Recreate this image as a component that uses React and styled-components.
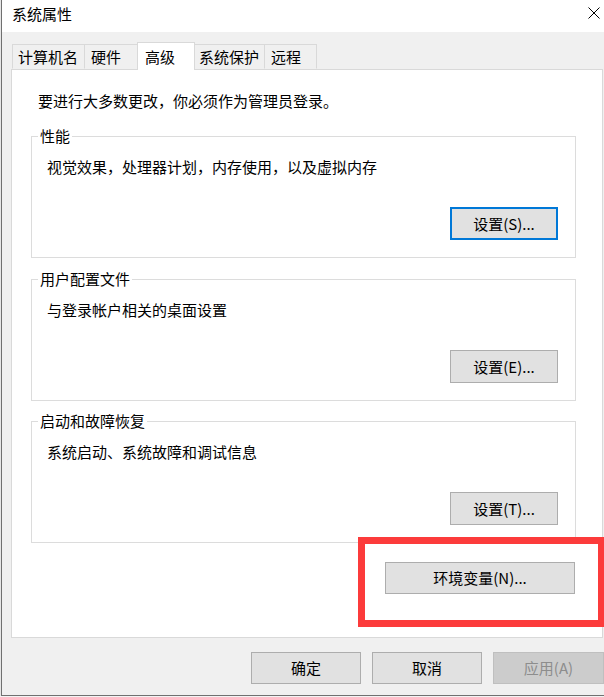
import React from 'react';
import styled, { createGlobalStyle } from 'styled-components';

const GlobalStyle = createGlobalStyle`
  html, body {
    margin: 0;
    padding: 0;
    overflow: hidden;
    background: #f3f3f3;
  }
  body {
    font-family: 'Noto Sans CJK SC', 'Noto Sans', sans-serif;
    font-size: 15px;
    line-height: 20px;
    color: #000000;
  }
`;

const Window = styled.div`
  position: relative;
  width: 615px;
  box-sizing: border-box;
  border-left: 1px solid #707070;
  border-bottom: 1px solid #707070;
  box-shadow: -1px 0 0 #e6e6e6;
  margin-left: 1px;
  background: #f0f0f0;
`;

const TitleBar = styled.div`
  height: 32px;
  display: flex;
  justify-content: space-between;
  align-items: flex-start;
  padding: 4px 16px 0 10px;
  box-sizing: border-box;
  background: #ffffff;
`;

const Title = styled.div`
  line-height: 20px;
`;

const CloseIcon = styled.svg`
  margin-top: 3px;
  width: 12px;
  height: 12px;
`;

const Body = styled.div`
  padding: 10px 11px 11px 9px;
  display: flex;
  flex-direction: column;
`;

const TabRow = styled.div`
  display: flex;
  align-items: flex-end;
  margin-left: 1px;
  height: 27px;
`;

const Tab = styled.div`
  position: relative;
  box-sizing: border-box;
  width: ${p => p.$w}px;
  height: ${p => (p.$active ? 28 : 25)}px;
  margin-left: ${p => (p.$first ? 0 : -1)}px;
  margin-bottom: ${p => (p.$active ? -1 : 0)}px;
  padding-left: ${p => p.$pad}px;
  display: flex;
  align-items: center;
  border: 1px solid #d9d9d9;
  border-bottom: ${p => (p.$active ? 'none' : '1px solid transparent')};
  background: ${p => (p.$active ? '#ffffff' : '#f0f0f0')};
  z-index: ${p => (p.$active ? 2 : 1)};
  white-space: nowrap;
`;

const Panel = styled.div`
  position: relative;
  width: 592px;
  box-sizing: border-box;
  background: #ffffff;
  border: 1px solid #d9d9d9;
  padding: 21px 26px 43px 19px;
  display: flex;
  flex-direction: column;
`;

const Intro = styled.div`
  padding-left: 7px;
`;

const Group = styled.fieldset`
  margin: ${p => p.$top}px 0 0 0;
  padding: 11px 17px 17px 15px;
  border: 1px solid #dcdcdc;
  min-width: 0;
  display: flex;
  flex-direction: column;
`;

const Legend = styled.legend`
  padding: 0 2px;
  margin-left: -9px;
  line-height: 20px;
`;

const Button = styled.button`
  box-sizing: border-box;
  width: ${p => p.$w}px;
  height: ${p => p.$h || 32}px;
  background: ${p => (p.$disabled ? '#cccccc' : '#e1e1e1')};
  border: ${p =>
    p.$focus ? '2px solid #0078d7' : p.$disabled ? '1px solid #bfbfbf' : '1px solid #adadad'};
  color: ${p => (p.$disabled ? '#8d8d8d' : '#000000')};
  font-family: inherit;
  font-size: 15px;
  line-height: 20px;
  padding: 0;
  border-radius: 0;
  flex-shrink: 0;
`;

const GroupButton = styled(Button)`
  align-self: flex-end;
  margin-top: 30px;
`;

const EnvButton = styled(Button)`
  align-self: flex-end;
  margin-top: 19px;
  margin-right: 1px;
`;

const Footer = styled.div`
  display: flex;
  justify-content: flex-end;
  gap: 11px;
  margin-top: 14px;
  margin-right: 1px;
`;

const Highlight = styled.div`
  position: absolute;
  left: 356px;
  top: 537px;
  width: 247px;
  height: 90px;
  box-sizing: border-box;
  border: 7px solid #fc3b3b;
  pointer-events: none;
`;

const groups = [
  { title: '性能', text: '视觉效果，处理器计划，内存使用，以及虚拟内存', btn: '设置(S)...', focus: true, top: 15 },
  { title: '用户配置文件', text: '与登录帐户相关的桌面设置', btn: '设置(E)...', top: 11 },
  { title: '启动和故障恢复', text: '系统启动、系统故障和调试信息', btn: '设置(T)...', top: 10 }
];

const tabs = [
  { label: '计算机名', w: 73, pad: 5 },
  { label: '硬件', w: 54, pad: 6 },
  { label: '高级', w: 58, pad: 7, active: true },
  { label: '系统保护', w: 71, pad: 4 },
  { label: '远程', w: 53, pad: 6 }
];

const App = () => (
  <>
    <GlobalStyle />
    <Window>
      <TitleBar>
        <Title>系统属性</Title>
        <CloseIcon viewBox="0 0 12 12">
          <path d="M0.5 0.5 L11.5 11.5 M11.5 0.5 L0.5 11.5" stroke="#000" strokeWidth="1" fill="none" />
        </CloseIcon>
      </TitleBar>
      <Body>
        <TabRow>
          {tabs.map((t, i) => (
            <Tab key={t.label} $w={t.w} $pad={t.pad} $active={t.active} $first={i === 0}>
              {t.label}
            </Tab>
          ))}
        </TabRow>
        <Panel>
          <Intro>要进行大多数更改，你必须作为管理员登录。</Intro>
          {groups.map(g => (
            <Group key={g.title} $top={g.top}>
              <Legend>{g.title}</Legend>
              <div>{g.text}</div>
              <GroupButton $w={108} $h={33} $focus={g.focus}>
                {g.btn}
              </GroupButton>
            </Group>
          ))}
          <EnvButton $w={190}>环境变量(N)...</EnvButton>
        </Panel>
        <Footer>
          <Button $w={110}>确定</Button>
          <Button $w={110}>取消</Button>
          <Button $w={111} $disabled>应用(A)</Button>
        </Footer>
      </Body>
      <Highlight />
    </Window>
  </>
);

export default App;
